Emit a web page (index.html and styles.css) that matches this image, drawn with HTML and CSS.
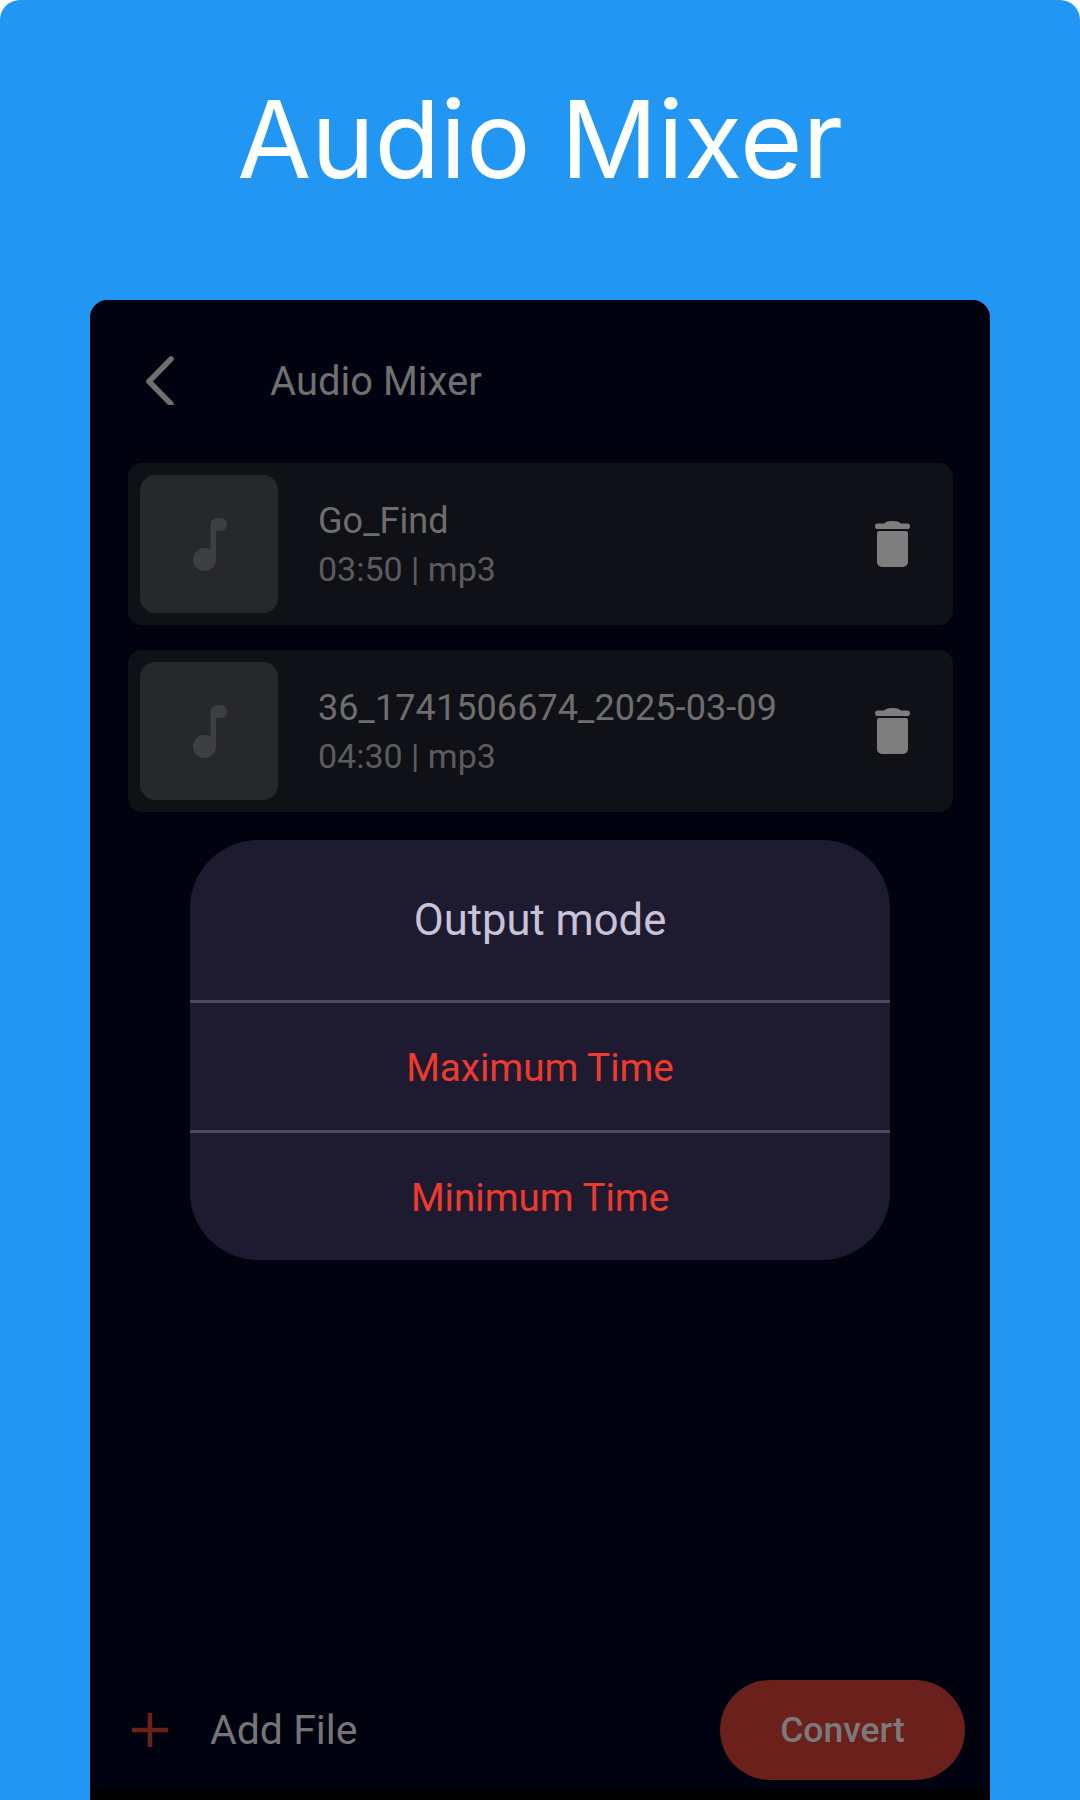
FILE: index.html
```html
<!DOCTYPE html>
<html lang="en">
<head>
<meta charset="utf-8">
<title>Audio Mixer</title>
<link rel="stylesheet" href="styles.css">
</head>
<body>
<main class="page">
  <h1 class="headline">Audio Mixer</h1>
  <section class="phone">
    <div class="screen">
      <header class="appbar">
        <svg class="back" viewBox="0 0 30 50" aria-hidden="true"><path d="M26 4 4 26.500 26 49"/></svg>
        <span class="appbar-title">Audio Mixer</span>
      </header>
      <ul class="files">
        <li class="file">
          <div class="thumb">
            <svg class="note" viewBox="0 0 35 53" aria-hidden="true"><path d="M25 0h3.500a6.500 6.500 0 0 1 0 13H24v28.500a11.500 11.500 0 1 1-5.500-9.800V7a7 7 0 0 1 6.500-7z"/></svg>
          </div>
          <div class="file-info">
            <div class="file-name">Go_Find</div>
            <div class="file-meta">03:50 | mp3</div>
          </div>
          <svg class="trash" viewBox="0 0 35 46" aria-hidden="true"><path d="M9 2.500C11 .8 13 0 17.500 0S24 .8 26 2.500h6.200a2.800 2.800 0 0 1 0 5.600H2.800a2.800 2.800 0 0 1 0-5.600zM4 10h27a2 2 0 0 1 2 2v29a5 5 0 0 1-5 5H7a5 5 0 0 1-5-5V12a2 2 0 0 1 2-2z"/></svg>
        </li>
        <li class="file">
          <div class="thumb">
            <svg class="note" viewBox="0 0 35 53" aria-hidden="true"><path d="M25 0h3.500a6.500 6.500 0 0 1 0 13H24v28.500a11.500 11.500 0 1 1-5.500-9.800V7a7 7 0 0 1 6.500-7z"/></svg>
          </div>
          <div class="file-info">
            <div class="file-name">36_1741506674_2025-03-09</div>
            <div class="file-meta">04:30 | mp3</div>
          </div>
          <svg class="trash" viewBox="0 0 35 46" aria-hidden="true"><path d="M9 2.500C11 .8 13 0 17.500 0S24 .8 26 2.500h6.200a2.800 2.800 0 0 1 0 5.600H2.800a2.800 2.800 0 0 1 0-5.600zM4 10h27a2 2 0 0 1 2 2v29a5 5 0 0 1-5 5H7a5 5 0 0 1-5-5V12a2 2 0 0 1 2-2z"/></svg>
        </li>
      </ul>
      <footer class="bottom">
        <div class="add">
          <svg class="plus" viewBox="0 0 36 34" aria-hidden="true"><path d="M18 0v34M0 17h36"/></svg>
          <span class="add-label">Add File</span>
        </div>
        <button class="convert" type="button">Convert</button>
      </footer>
    </div>
    <div class="dialog">
      <div class="dialog-title">Output mode</div>
      <div class="dialog-option">Maximum Time</div>
      <div class="dialog-option">Minimum Time</div>
    </div>
  </section>
</main>
</body>
</html>
```
FILE: styles.css
```css
* { box-sizing: border-box; }
html, body { margin: 0; background: #fff; }
.page {
  width: 1080px;
  height: 1800px;
  background: #2196f3;
  border-radius: 20px 20px 0 0;
  padding: 0 90px;
  display: flex;
  flex-direction: column;
  overflow: hidden;
}
.headline {
  height: 300px;
  flex: none;
  margin: 0;
  padding-top: 76px;
  text-align: center;
  font: 400 107.300px/126px Inter, sans-serif;
  color: #fff;
}
.phone {
  position: relative;
  flex: 1;
  display: flex;
  flex-direction: column;
  background: #000;
  border-radius: 18px 18px 0 0;
  overflow: hidden;
  font-family: Roboto, sans-serif;
}
.screen {
  height: 1490px;
  flex: none;
  background: #00020f;
  display: flex;
  flex-direction: column;
  padding: 0 37px 0 38px;
}
.appbar {
  height: 163px;
  flex: none;
  display: flex;
  align-items: center;
  padding-left: 17px;
  padding-bottom: 3px;
}
.back {
  width: 30px;
  height: 50px;
  fill: none;
  stroke: #6f6f6f;
  stroke-width: 5.500;
  stroke-linecap: round;
  stroke-linejoin: round;
}
.appbar-title {
  margin-left: 95px;
  padding-top: 2px;
  font-size: 40px;
  color: #707070;
}
.files {
  list-style: none;
  margin: 0;
  padding: 0;
  display: flex;
  flex-direction: column;
  gap: 25px;
}
.file {
  height: 162px;
  background: #0f1116;
  border-radius: 14px;
  display: flex;
  align-items: center;
  padding: 0 12px;
}
.thumb {
  width: 138px;
  height: 138px;
  flex: none;
  background: #27282c;
  border-radius: 15px;
  display: flex;
  align-items: center;
  justify-content: center;
}
.note { width: 35px; height: 53px; fill: #3e3f42; }
.file-info { margin-left: 40px; padding-top: 2px; flex: 1; }
.file-name { font-size: 36px; line-height: 48px; letter-spacing: .08px; color: #6e6e6e; }
.file-meta { font-size: 34px; line-height: 48px; color: #5c5c5e; }
.trash { width: 35px; height: 46px; fill: #7e7e7e; margin-right: 31px; flex: none; }
.bottom {
  margin-top: auto;
  height: 100px;
  flex: none;
  display: flex;
  align-items: center;
  justify-content: space-between;
  margin-right: -12px;
  margin-bottom: 10px;
}
.add { display: flex; align-items: center; margin-left: 4px; }
.plus { width: 36px; height: 34px; fill: none; stroke: #6b2019; stroke-width: 4.500px; }
.add-label { margin-left: 42px; font-size: 41px; color: #757575; }
.convert {
  width: 245px;
  height: 100px;
  border: 0;
  border-radius: 50px;
  background: #6b201b;
  color: #7a7a7a;
  font: 500 35.500px Roboto, sans-serif;
}
.dialog {
  position: absolute;
  left: 100px;
  top: 540px;
  width: 700px;
  height: 420px;
  border-radius: 68px;
  background: #1e1a30;
  display: flex;
  flex-direction: column;
  text-align: center;
}
.dialog-title {
  height: 160px;
  padding-top: 56px;
  font-size: 43.600px;
  line-height: 50px;
  color: #c8c3d6;
}
.dialog-option {
  height: 130px;
  border-top: 3px solid #4e4a60;
  padding-top: 40px;
  font-size: 38.600px;
  line-height: 50px;
  color: #ee3b2d;
}
```
